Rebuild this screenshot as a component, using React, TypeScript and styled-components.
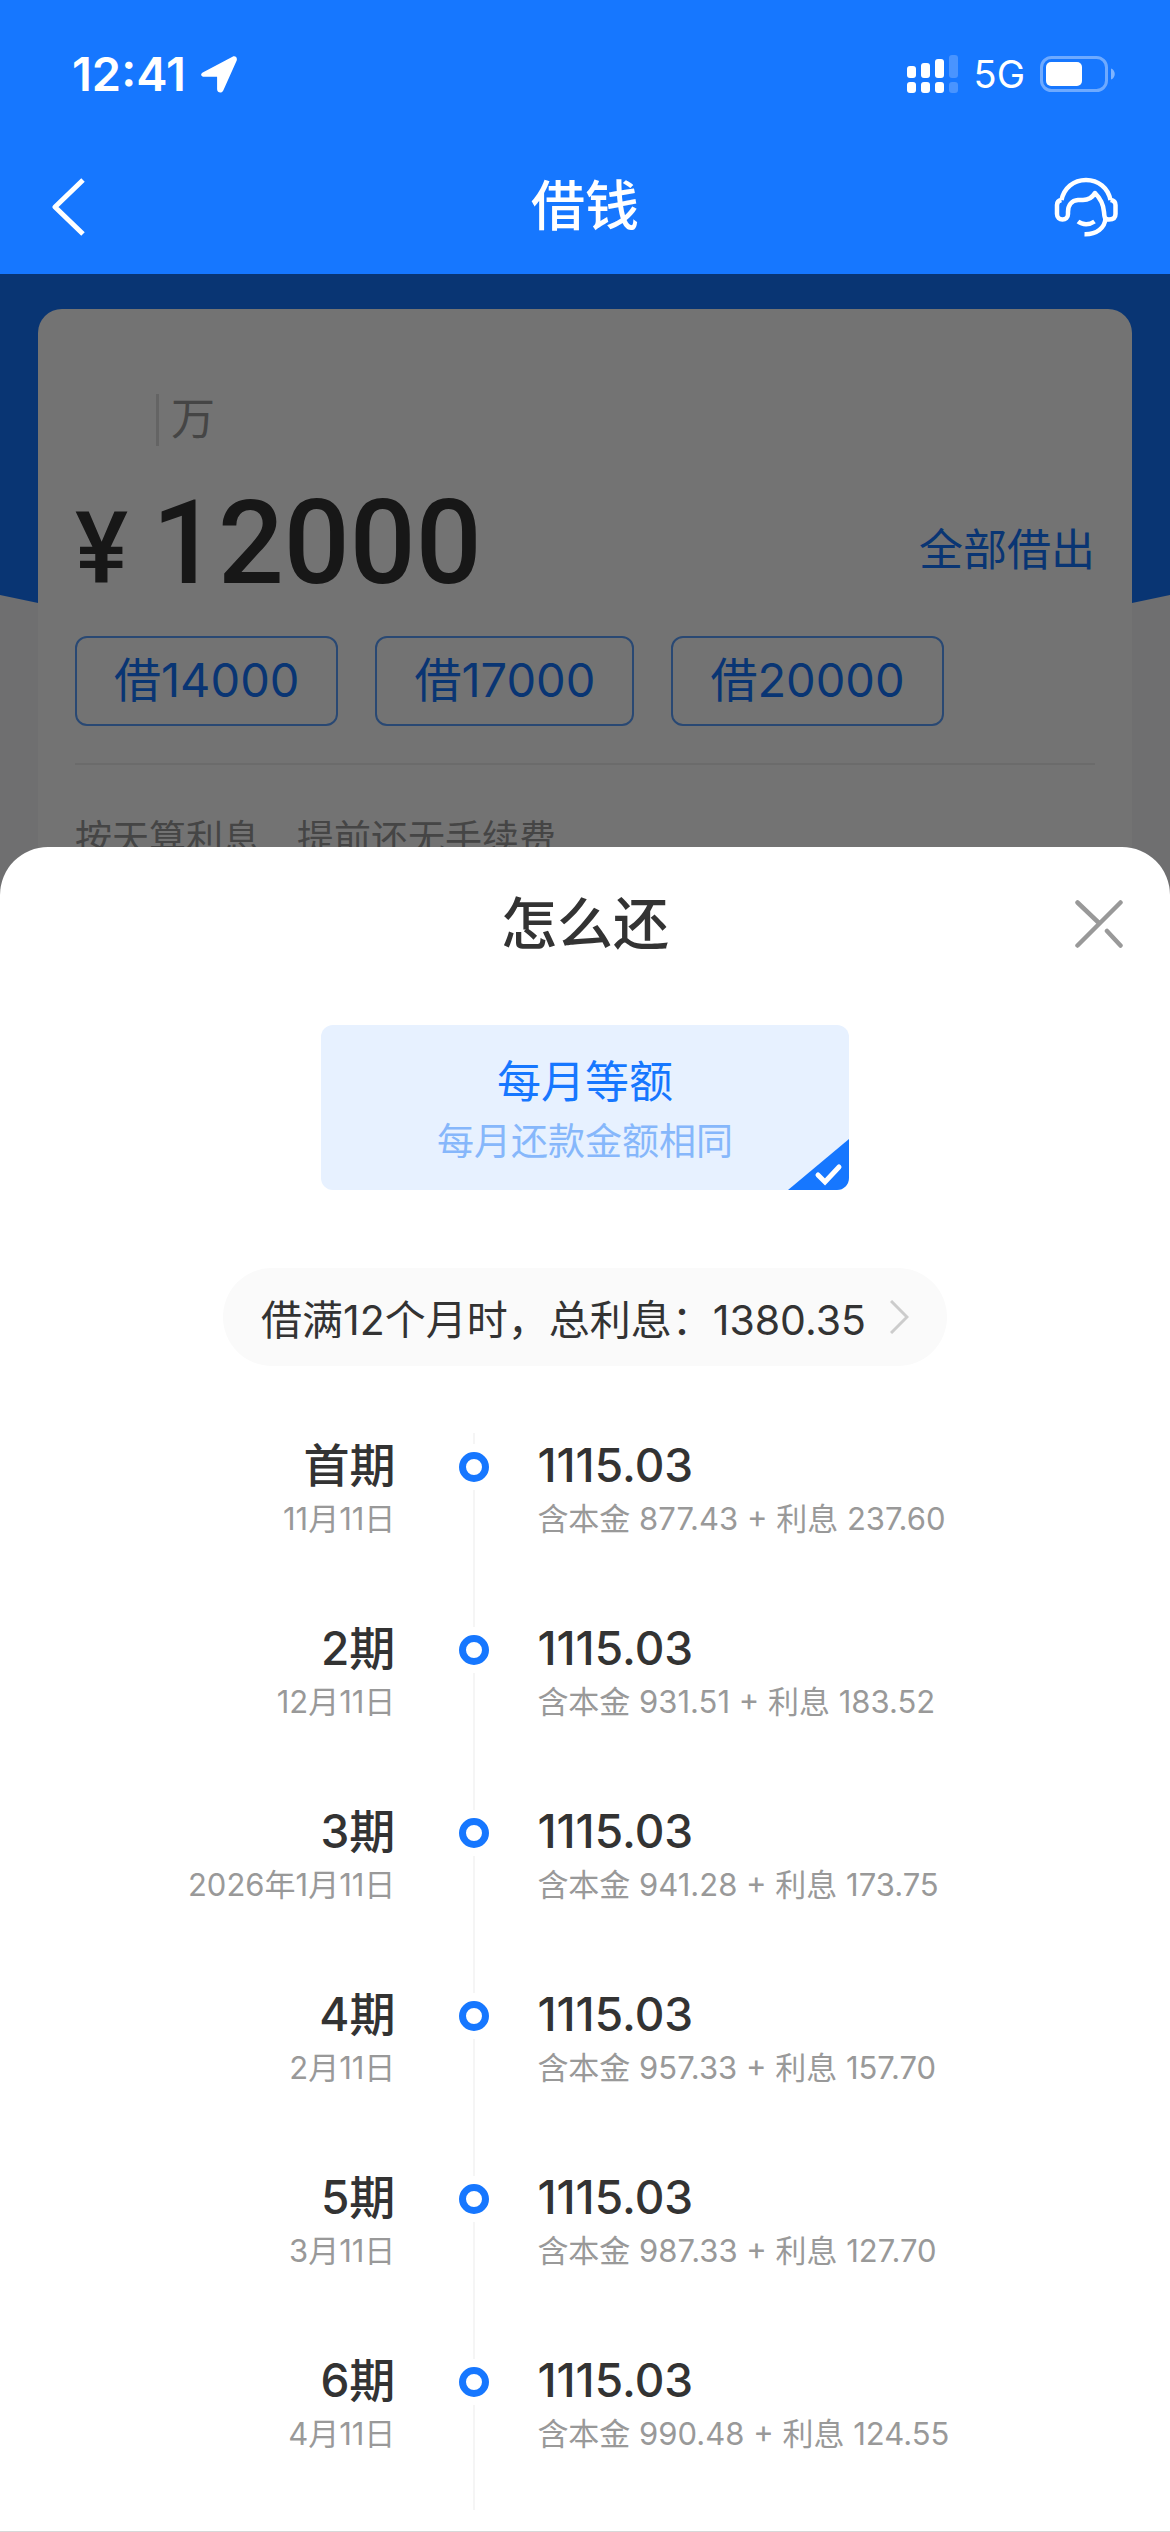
import React, { useState } from 'react';
import styled, { createGlobalStyle } from 'styled-components';

const BLUE = '#1677ff';
const INK = '#333333';
const MUTED = '#999999';

const GlobalStyle = createGlobalStyle`
  *, *::before, *::after { box-sizing: border-box; }
  body { margin: 0; }
  body, button, input {
    font-family: Inter, "Noto Sans CJK SC", sans-serif;
    color: ${INK};
  }
  button, input { border: 0; padding: 0; background: none; }
  button { cursor: pointer; }
  h1, h2, p, ol { margin: 0; padding: 0; }
  svg { display: block; }
`;

const Page = styled.div`
  display: flex;
  flex-direction: column;
  min-height: 100vh;
  background: #f5f5f9;
`;

const TopBar = styled.header`
  background: ${BLUE};
  color: #ffffff;
`;

const StatusBar = styled.div`
  display: flex;
  align-items: center;
  justify-content: space-between;
  height: 140px;
  padding: 8px 54px 0 72px;
`;

const StatusGroup = styled.div`
  display: flex;
  align-items: center;
  gap: 15px;
`;

const Clock = styled.span`
  font-size: 47px;
  line-height: 56px;
  font-weight: 600;
`;

const Network = styled.span`
  font-size: 38px;
  line-height: 48px;
`;

const NavBar = styled.nav`
  display: grid;
  grid-template-columns: 64px 1fr 64px;
  align-items: center;
  height: 134px;
  padding: 0 52px;
`;

const NavTitle = styled.h1`
  font-size: 54px;
  line-height: 64px;
  font-weight: 500;
  text-align: center;
`;

const IconButton = styled.button`
  display: flex;
  color: inherit;
`;

const Stage = styled.main`
  display: grid;
  grid-template-columns: minmax(0, 1fr);
  flex: 1;
`;

const Backdrop = styled.div`
  grid-area: 1 / 1;
  padding: 35px 38px 0;
  background: linear-gradient(${BLUE}, ${BLUE}) top / 100% 321px no-repeat;
  position: relative;
  isolation: isolate;

  &::before {
    content: '';
    position: absolute;
    z-index: -1;
    top: 321px;
    left: 0;
    right: 0;
    height: 123px;
    background: ${BLUE};
    clip-path: polygon(0 0, 100% 0, 50% 100%);
  }
`;

const LoanCard = styled.section`
  height: 100%;
  padding: 85px 37px 0;
  border-radius: 24px 24px 0 0;
  background: #ffffff;
`;

const UnitMark = styled.div`
  display: flex;
  align-items: center;
  margin-left: 81px;
  padding: 0 0 2px 12px;
  border-left: 3px solid #dddddd;
  height: 52px;
  font-size: 44px;
  line-height: 44px;
  color: ${MUTED};
`;

const AmountRow = styled.div`
  display: flex;
  align-items: baseline;
  margin-top: 37px;
  height: 120px;
`;

const Currency = styled.label`
  width: 77px;
  font-family: Roboto, sans-serif;
  font-size: 100px;
  line-height: 120px;
  font-weight: 500;
`;

const AmountInput = styled.input`
  flex: 1;
  min-width: 0;
  height: 120px;
  font-family: Roboto, sans-serif;
  font-size: 116px;
  line-height: 120px;
  font-weight: 500;
  outline: none;
`;

const BorrowAll = styled.button`
  align-self: center;
  padding-top: 14px;
  font-size: 44px;
  line-height: 52px;
  color: ${BLUE};
`;

const QuickPicks = styled.div`
  display: flex;
  gap: 37px;
  margin-top: 33px;
  padding-bottom: 37px;
  border-bottom: 2px solid #eeeeee;
`;

const QuickPick = styled.button`
  height: 90px;
  padding: 0 37px 3px;
  border: 2px solid rgba(22, 119, 255, 0.7);
  border-radius: 12px;
  font-size: 47px;
  line-height: 60px;
  color: ${BLUE};
`;

const Perks = styled.p`
  display: flex;
  gap: 37px;
  margin-top: 46px;
  font-size: 37px;
  line-height: 56px;
  color: ${MUTED};
`;

const Mask = styled.div`
  grid-area: 1 / 1;
  display: flex;
  flex-direction: column;
  padding-top: 573px;
  background: rgba(0, 0, 0, 0.55);
  z-index: 1;
`;

const Sheet = styled.section`
  flex: 1;
  display: flex;
  flex-direction: column;
  align-items: center;
  padding-bottom: 20px;
  border-radius: 48px 48px 0 0;
  background: #ffffff;
  border-bottom: 1px solid #d8d8d8;
`;

const SheetHeader = styled.header`
  display: grid;
  grid-template-columns: 48px 1fr 48px;
  align-items: center;
  width: 100%;
  height: 154px;
  padding: 0 47px;
  color: ${MUTED};
`;

const SheetTitle = styled.h2`
  grid-column: 2;
  font-size: 56px;
  line-height: 64px;
  font-weight: 500;
  text-align: center;
  color: ${INK};
`;

const PlanOption = styled.label`
  position: relative;
  display: flex;
  flex-direction: column;
  align-items: center;
  width: 528px;
  height: 165px;
  margin-top: 24px;
  padding-top: 27px;
  border-radius: 12px;
  overflow: hidden;
  background: #e7f1ff;
`;

const PlanRadio = styled.input`
  position: absolute;
  inset: 0;
  margin: 0;
  opacity: 0;
`;

const PlanName = styled.span`
  font-size: 44px;
  line-height: 60px;
  color: ${BLUE};
`;

const PlanNote = styled.span`
  font-size: 37px;
  line-height: 60px;
  color: #86b7fb;
`;

const PlanTick = styled.svg`
  position: absolute;
  right: 0;
  bottom: 0;
`;

const InterestPill = styled.button`
  display: flex;
  align-items: center;
  gap: 24px;
  height: 98px;
  margin-top: 78px;
  padding: 0 38px;
  border-radius: 49px;
  background: #fafafa;
  font-size: 41px;
`;

const Timeline = styled.ol`
  width: 100%;
  margin-top: 67px;
  list-style: none;
`;

const Period = styled.li`
  display: grid;
  grid-template-columns: minmax(0, 5fr) 142px minmax(0, 8fr);
  height: 183px;

  &:last-child { height: 162px; }
`;

const PeriodText = styled.div<{ $end?: boolean }>`
  text-align: ${(p) => (p.$end ? 'right' : 'left')};
  white-space: nowrap;
`;

const Strong = styled.p`
  font-size: 46px;
  line-height: 64px;
  font-weight: 500;
`;

const Small = styled.p`
  font-size: 31px;
  line-height: 44px;
  color: ${MUTED};
`;

const Rail = styled.div`
  display: flex;
  flex-direction: column;
  align-items: center;
  width: 30px;
  margin-left: 64px;

  &::before, &::after {
    content: '';
    width: 2px;
    height: 11px;
    background: #f5f5f5;
  }
  &::after { flex: 1; }
`;

const Dot = styled.span`
  width: 30px;
  height: 30px;
  margin: 8px 0;
  border: 7px solid ${BLUE};
  border-radius: 50%;
`;

const LocationArrow = () => (
  <svg width="36" height="37" viewBox="0 0 36 37" aria-hidden="true">
    <path d="M2.2 16.2 31.5 .7c2.8-1.3 5.1.8 4.2 3.7L22.4 34.2c-1.4 3.5-6.2 2.8-6.3-1V20.8H3.6c-4-.2-4.6-3-1.4-4.6Z" fill="#fff" />
  </svg>
);

const SignalIcon = () => (
  <svg width="52" height="38" viewBox="0 0 52 38" fill="#fff" aria-hidden="true">
    <rect x="0" y="11" width="9" height="12" rx="3" />
    <rect x="14" y="8" width="9" height="15" rx="3" />
    <rect x="28" y="4" width="9" height="19" rx="3" />
    <rect x="42" y="0" width="9" height="23" rx="3" opacity=".22" />
    <rect x="0" y="27" width="9" height="11" rx="3" />
    <rect x="14" y="27" width="9" height="11" rx="3" />
    <rect x="28" y="27" width="9" height="11" rx="3" />
    <rect x="42" y="27" width="9" height="11" rx="3" opacity=".22" />
  </svg>
);

const BatteryIcon = () => (
  <svg width="76" height="36" viewBox="0 0 76 36" aria-hidden="true">
    <rect x="1.5" y="1.5" width="65" height="33" rx="10" fill="none" stroke="#fff" strokeOpacity=".38" strokeWidth="3" />
    <rect x="6" y="6" width="36" height="24" rx="5" fill="#fff" />
    <path d="M71 12.5c5 1.500 5 9.500 0 11Z" fill="#fff" opacity=".45" />
  </svg>
);

const BackIcon = () => (
  <svg width="34" height="58" viewBox="0 0 34 58" aria-hidden="true">
    <path d="M31 2 3 29l28 27" fill="none" stroke="#fff" strokeWidth="5" strokeLinejoin="round" />
  </svg>
);

const ServiceIcon = () => (
  <svg width="64" height="60" viewBox="0 0 64 60" fill="none" stroke="#fff" strokeWidth="4.5" strokeLinejoin="round" aria-hidden="true">
    <path d="M7.5 23C10 11 19.500 3 32 3s22 8 24.500 20" />
    <path d="M7.500 23C4 23.500 3 25.500 3 28v9c0 3.500 2.500 5.500 5.500 5.500S14 40.500 14 37v-2c0-7 3.500-11.500 10-12h5c6 0 9-2 12-7 5 5 8.500 11.500 9 19 .3 5 .5 7.500 5 7.500s6.500-2 6.500-5.500v-9c0-2.500-1.500-4.500-5-5" />
    <path d="M24 44.500c4.500 3.500 11.500 3.500 16.500 0" />
    <path d="M51.500 41C51 51 42.500 57.500 30.500 57.200" />
  </svg>
);

const CloseIcon = () => (
  <svg width="48" height="48" viewBox="0 0 48 48" stroke="currentColor" strokeWidth="4.5" strokeLinecap="round" aria-hidden="true">
    <path d="M45.5 2.5 2.5 45.5M2.5 2.5 24 23M32 31l13.5 14.5" />
  </svg>
);

const ChevronIcon = () => (
  <svg width="19" height="34" viewBox="0 0 19 34" fill="none" stroke="#cccccc" strokeWidth="3" aria-hidden="true">
    <path d="m1 1 16 16L1 33" />
  </svg>
);

const quickPicks = [14000, 17000, 20000];

const periods = [
  { name: '首期', date: '11月11日', principal: '877.43', interest: '237.60' },
  { name: '2期', date: '12月11日', principal: '931.51', interest: '183.52' },
  { name: '3期', date: '2026年1月11日', principal: '941.28', interest: '173.75' },
  { name: '4期', date: '2月11日', principal: '957.33', interest: '157.70' },
  { name: '5期', date: '3月11日', principal: '987.33', interest: '127.70' },
  { name: '6期', date: '4月11日', principal: '990.48', interest: '124.55' },
];

export default function App() {
  const [amount, setAmount] = useState('12000');

  return (
    <Page>
      <GlobalStyle />
      <TopBar>
        <StatusBar>
          <StatusGroup>
            <Clock>12:41</Clock>
            <LocationArrow />
          </StatusGroup>
          <StatusGroup>
            <SignalIcon />
            <Network>5G</Network>
            <BatteryIcon />
          </StatusGroup>
        </StatusBar>
        <NavBar>
          <IconButton aria-label="返回"><BackIcon /></IconButton>
          <NavTitle>借钱</NavTitle>
          <IconButton aria-label="客服"><ServiceIcon /></IconButton>
        </NavBar>
      </TopBar>

      <Stage>
        <Backdrop>
          <LoanCard>
            <UnitMark>万</UnitMark>
            <AmountRow>
              <Currency htmlFor="amount">¥</Currency>
              <AmountInput
                id="amount"
                inputMode="numeric"
                value={amount}
                onChange={(e) => setAmount(e.target.value)}
              />
              <BorrowAll>全部借出</BorrowAll>
            </AmountRow>
            <QuickPicks>
              {quickPicks.map((n) => (
                <QuickPick key={n} onClick={() => setAmount(String(n))}>借{n}</QuickPick>
              ))}
            </QuickPicks>
            <Perks>
              <span>按天算利息</span>
              <span>提前还无手续费</span>
            </Perks>
          </LoanCard>
        </Backdrop>

        <Mask>
          <Sheet role="dialog" aria-labelledby="sheet-title">
            <SheetHeader>
              <SheetTitle id="sheet-title">怎么还</SheetTitle>
              <IconButton aria-label="关闭"><CloseIcon /></IconButton>
            </SheetHeader>

            <PlanOption>
              <PlanRadio type="radio" name="plan" defaultChecked />
              <PlanName>每月等额</PlanName>
              <PlanNote>每月还款金额相同</PlanNote>
              <PlanTick width="61" height="51" viewBox="0 0 61 51" aria-hidden="true">
                <path d="M0 51 61 0v51Z" fill={BLUE} />
                <path d="m30 36 7 7 14-15" fill="none" stroke="#fff" strokeWidth="5" strokeLinecap="round" />
              </PlanTick>
            </PlanOption>

            <InterestPill>
              <span>借满12个月时，总利息：1380.35</span>
              <ChevronIcon />
            </InterestPill>

            <Timeline>
              {periods.map((p) => (
                <Period key={p.name}>
                  <PeriodText $end>
                    <Strong>{p.name}</Strong>
                    <Small>{p.date}</Small>
                  </PeriodText>
                  <Rail><Dot /></Rail>
                  <PeriodText>
                    <Strong>1115.03</Strong>
                    <Small>含本金 {p.principal} + 利息 {p.interest}</Small>
                  </PeriodText>
                </Period>
              ))}
            </Timeline>
          </Sheet>
        </Mask>
      </Stage>
    </Page>
  );
}
